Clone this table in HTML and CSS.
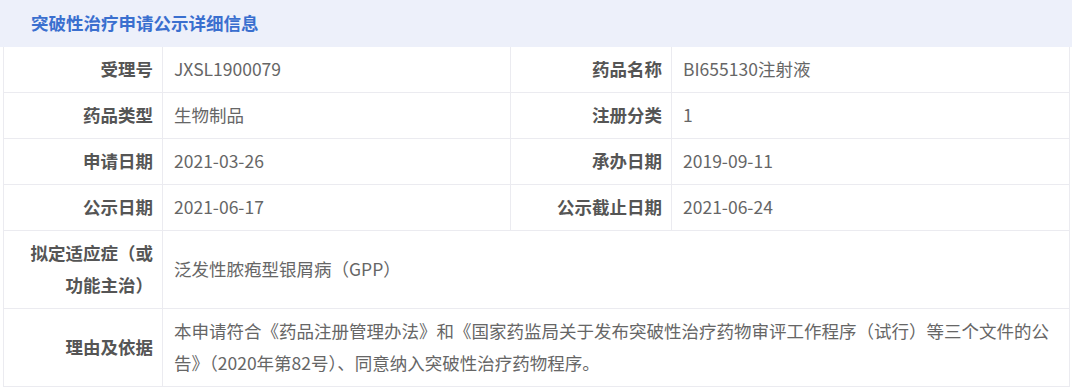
FILE: index.html
```html
<!DOCTYPE html>
<html lang="zh">
<head>
<meta charset="utf-8">
<title>突破性治疗申请公示详细信息</title>
<link rel="stylesheet" href="styles.css">
</head>
<body>
<div class="panel">
  <div class="panel-head">突破性治疗申请公示详细信息</div>
  <table class="info">
    <colgroup>
      <col class="c-label">
      <col class="c-value">
      <col class="c-label2">
      <col class="c-value2">
    </colgroup>
    <tr>
      <th>受理号</th><td>JXSL1900079</td>
      <th>药品名称</th><td>BI655130注射液</td>
    </tr>
    <tr>
      <th>药品类型</th><td>生物制品</td>
      <th>注册分类</th><td>1</td>
    </tr>
    <tr>
      <th>申请日期</th><td>2021-03-26</td>
      <th>承办日期</th><td>2019-09-11</td>
    </tr>
    <tr>
      <th>公示日期</th><td>2021-06-17</td>
      <th>公示截止日期</th><td>2021-06-24</td>
    </tr>
    <tr>
      <th>拟定适应症（或功能主治）</th><td colspan="3">泛发性脓疱型银屑病（GPP）</td>
    </tr>
    <tr>
      <th>理由及依据</th><td colspan="3">本申请符合《药品注册管理办法》和《国家药监局关于发布突破性治疗药物审评工作程序（试行）等三个文件的公告》（2020年第82号）、同意纳入突破性治疗药物程序。</td>
    </tr>
  </table>
</div>
</body>
</html>
```
FILE: styles.css
```css
html, body {
  margin: 0;
  padding: 0;
  background: #ffffff;
}
body {
  font-family: "Noto Sans CJK SC", "Noto Sans", sans-serif;
}
.panel {
  width: 1072px;
}
.panel-head {
  height: 47px;
  line-height: 46px;
  background: #edf0fa;
  color: #3a6fcf;
  font-size: 17.5px;
  font-weight: bold;
  padding-left: 31px;
}
.info {
  border-collapse: collapse;
  margin-left: 3px;
  width: 1066px;
  table-layout: fixed;
  font-size: 17.5px;
}
.c-label { width: 159px; }
.c-value { width: 348px; }
.c-label2 { width: 161px; }
.c-value2 { width: 398px; }
.info th, .info td {
  border: 1px solid #ebebf0;
  line-height: 32px;
  padding: 6px 10px 7px 11px;
  vertical-align: middle;
}
.info th {
  text-align: right;
  color: #555555;
  font-weight: bold;
  padding-left: 18px;
  padding-right: 9px;
}
.info td {
  text-align: left;
  color: #666666;
  font-weight: normal;
}
.info tr:first-child th, .info tr:first-child td {
  border-top: none;
}
```
